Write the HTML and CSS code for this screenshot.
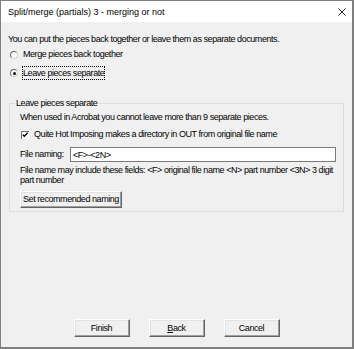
FILE: index.html
```html
<!DOCTYPE html>
<html>
<head>
<meta charset="utf-8">
<title>Split/merge (partials) 3 - merging or not</title>
<link rel="stylesheet" href="styles.css">
</head>
<body>
<div class="window">
  <div class="titlebar">
    <span class="title">Split/merge (partials) 3 - merging or not</span>
    <svg class="close" width="8" height="8" viewBox="0 0 8 8"><path d="M0.5 0.5 L7.5 7.5 M7.5 0.5 L0.5 7.5" stroke="#111" stroke-width="0.9" fill="none"/></svg>
  </div>
  <div class="content">
    <p class="intro">You can put the pieces back together or leave them as separate documents.</p>
    <div class="radio-row r1"><span class="radio"></span><span class="label">Merge pieces back together</span></div>
    <div class="radio-row r2"><span class="radio checked"></span><span class="label focus">Leave pieces separate</span></div>
    <fieldset class="group">
      <legend>Leave pieces separate</legend>
      <p class="line">When used in Acrobat you cannot leave more than 9 separate pieces.</p>
      <div class="check-row">
        <svg class="checkbox" width="8" height="8" viewBox="0 0 8 8"><rect x="0" y="0" width="8" height="8" fill="#fff"/><path d="M0.5 8 V0.5 H8" stroke="#6d6d6d" fill="none"/><path d="M1.8 3.6 L3.3 5.3 L6.7 1.8" stroke="#000" stroke-width="1.4" fill="none"/></svg>
        <span class="label">Quite Hot Imposing makes a directory in OUT from original file name</span>
      </div>
      <div class="field-row">
        <span class="field-label">File naming:</span>
        <input class="field" type="text" value="&lt;F&gt;-&lt;2N&gt;">
      </div>
      <p class="hint">File name may include these fields: &lt;F&gt; original file name &lt;N&gt; part number &lt;3N&gt; 3 digit part number</p>
      <button class="btn set">Set recommended naming</button>
    </fieldset>
    <div class="actions">
      <button class="btn">Finish</button>
      <button class="btn"><u>B</u>ack</button>
      <button class="btn">Cancel</button>
    </div>
  </div>
</div>
</body>
</html>
```

FILE: styles.css
```css
* { box-sizing: border-box; }
html, body { margin: 0; padding: 0; }
body {
  width: 354px;
  height: 349px;
  overflow: hidden;
  font-family: "Liberation Sans", Arial, sans-serif;
  font-size: 9px;
  color: #000;
  background: #f0f0f0;
}
.window {
  width: 354px;
  height: 349px;
  border: solid #7f7f7f;
  border-width: 1px 2px 2px 1px;
  background: #f0f0f0;
  display: flex;
  flex-direction: column;
}
.titlebar {
  height: 21px;
  background: #fff;
  display: flex;
  align-items: flex-start;
  padding: 2px 6px 0 7px;
}
.title { line-height: 19px; }
.close { margin-left: auto; margin-top: 5px; }

.content {
  flex: 1;
  display: flex;
  flex-direction: column;
  padding: 12px 7px 10px 7px;
  letter-spacing: -0.44px;
}
.intro { margin: 0; line-height: 11px; }
.label { line-height: 11px; }

.radio-row { display: flex; align-items: center; padding-left: 2px; }
.r1 { height: 13px; margin-top: 3px; }
.r2 { height: 14px; margin-top: 5px; }
.radio {
  width: 8px;
  height: 8px;
  border-radius: 50%;
  border: 1px solid;
  border-color: #6a6a6a #cfcfcf #cfcfcf #6a6a6a;
  background: #fff;
  margin-right: 5px;
  display: flex;
  align-items: center;
  justify-content: center;
}
.radio.checked::after {
  content: "";
  width: 3px;
  height: 3px;
  border-radius: 50%;
  background: #000;
}
.focus {
  border: 1px dotted #000;
  line-height: 12px;
  margin-left: -1px;
}

.group {
  margin: 18px 1px 0 1px;
  padding: 3px 7px 3px 10px;
  border: 1px solid #dcdcdc;
  min-width: 0;
}
.group legend {
  padding: 0 1px;
  margin-left: -5px;
  line-height: 11px;
}
.line { margin: 0; line-height: 11px; }

.check-row { display: flex; align-items: center; height: 13px; margin-top: 5px; }
.checkbox { margin-left: 1px; margin-right: 5px; flex: none; }

.field-row { display: flex; align-items: center; height: 15px; margin-top: 6px; }
.field-label { width: 50px; line-height: 11px; flex: none; }
.field {
  flex: 1;
  min-width: 0;
  height: 15px;
  border: 1px solid #7a7a7a;
  padding: 0 2px;
  margin: 0;
  font: inherit;
  letter-spacing: inherit;
  color: #000;
  background: #fff;
  outline: none;
}

.hint { margin: 3px 0 0; line-height: 10px; }

.btn {
  font: inherit;
  letter-spacing: inherit;
  color: #000;
  background: #f0f0f0;
  border: 1px solid;
  border-color: #fff #646464 #646464 #fff;
  box-shadow: inset -1px -1px #a0a0a0, inset 1px 1px #e3e3e3;
  padding: 0;
  margin: 0;
  line-height: 11px;
}
.set { display: block; width: 102px; height: 17px; margin-top: 6px; }

.actions {
  margin-top: auto;
  display: flex;
  justify-content: center;
  gap: 19px;
}
.actions .btn { width: 56px; height: 18px; }
```
